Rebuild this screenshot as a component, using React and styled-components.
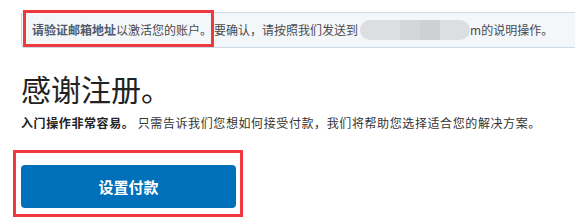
import React from 'react';
import styled, { createGlobalStyle } from 'styled-components';

const GlobalStyle = createGlobalStyle`
  html, body {
    margin: 0;
    padding: 0;
    background: #ffffff;
  }
  body {
    font-family: "Noto Sans CJK SC", "Liberation Sans", sans-serif;
    overflow: hidden;
  }
`;

const Page = styled.div`
  width: 575px;
  height: 224px;
  padding: 12px 0 0 21px;
  box-sizing: border-box;
  overflow: hidden;
`;

const Notice = styled.div`
  display: flex;
  align-items: center;
  height: 36px;
  width: 600px;
  box-sizing: border-box;
  padding-left: 10px;
  background: #f4f7fa;
  border: 1px solid #cbdbe7;
  border-radius: 3px;
  font-size: 12px;
  line-height: 16px;
  color: #4a4a4a;
  white-space: nowrap;
`;

const Marked = styled.span`
  position: relative;
  display: inline-block;
  margin-right: 2px;

  &::after {
    content: '';
    position: absolute;
    left: -9px;
    right: -2px;
    top: -12px;
    bottom: -9px;
    border: 3px solid #f0393e;
    pointer-events: none;
  }
`;

const Strong = styled.b`
  font-weight: 700;
  color: ${(p) => p.$color || '#4f5a6b'};
`;

const Blur = styled.span`
  display: inline-block;
  width: 110px;
  height: 20px;
  margin-left: 2px;
  border-radius: 10px;
  vertical-align: middle;
  background: linear-gradient(
    90deg,
    #dcdfe2 0 36%,
    #d4d7da 36% 55%,
    #ced1d4 55% 73%,
    #dcdfe2 73% 100%
  );
`;

const Title = styled.h1`
  margin: 25px 0 0;
  font-size: 30px;
  line-height: 30px;
  font-weight: 400;
  color: #222;
`;

const Lead = styled.p`
  margin: 12px 0 0;
  font-size: 12px;
  line-height: 16px;
  letter-spacing: 0.6px;
  color: #333;
  white-space: nowrap;
`;

const Highlight = styled.div`
  display: inline-block;
  margin: 19px 0 0 -8px;
  padding: 12px 4px 6px 5px;
  border: 3px solid #f0393e;
`;

const Button = styled.button`
  display: block;
  width: 215px;
  height: 43px;
  border: none;
  border-radius: 4px;
  background: #0070ba;
  color: #fff;
  font-family: inherit;
  font-size: 15px;
  font-weight: 700;
  cursor: pointer;
`;

const App = () => {
  return (
    <Page>
      <GlobalStyle />
      <Notice>
        <Marked>
          <Strong>请验证邮箱地址</Strong>以激活您的账户。
        </Marked>
        要确认，请按照我们发送到<Blur />m的说明操作。
      </Notice>
      <Title>感谢注册。</Title>
      <Lead>
        <Strong $color="#222">入门操作非常容易。</Strong> 只需告诉我们您想如何接受付款，我们将帮助您选择适合您的解决方案。
      </Lead>
      <Highlight>
        <Button>设置付款</Button>
      </Highlight>
    </Page>
  );
};

export default App;
